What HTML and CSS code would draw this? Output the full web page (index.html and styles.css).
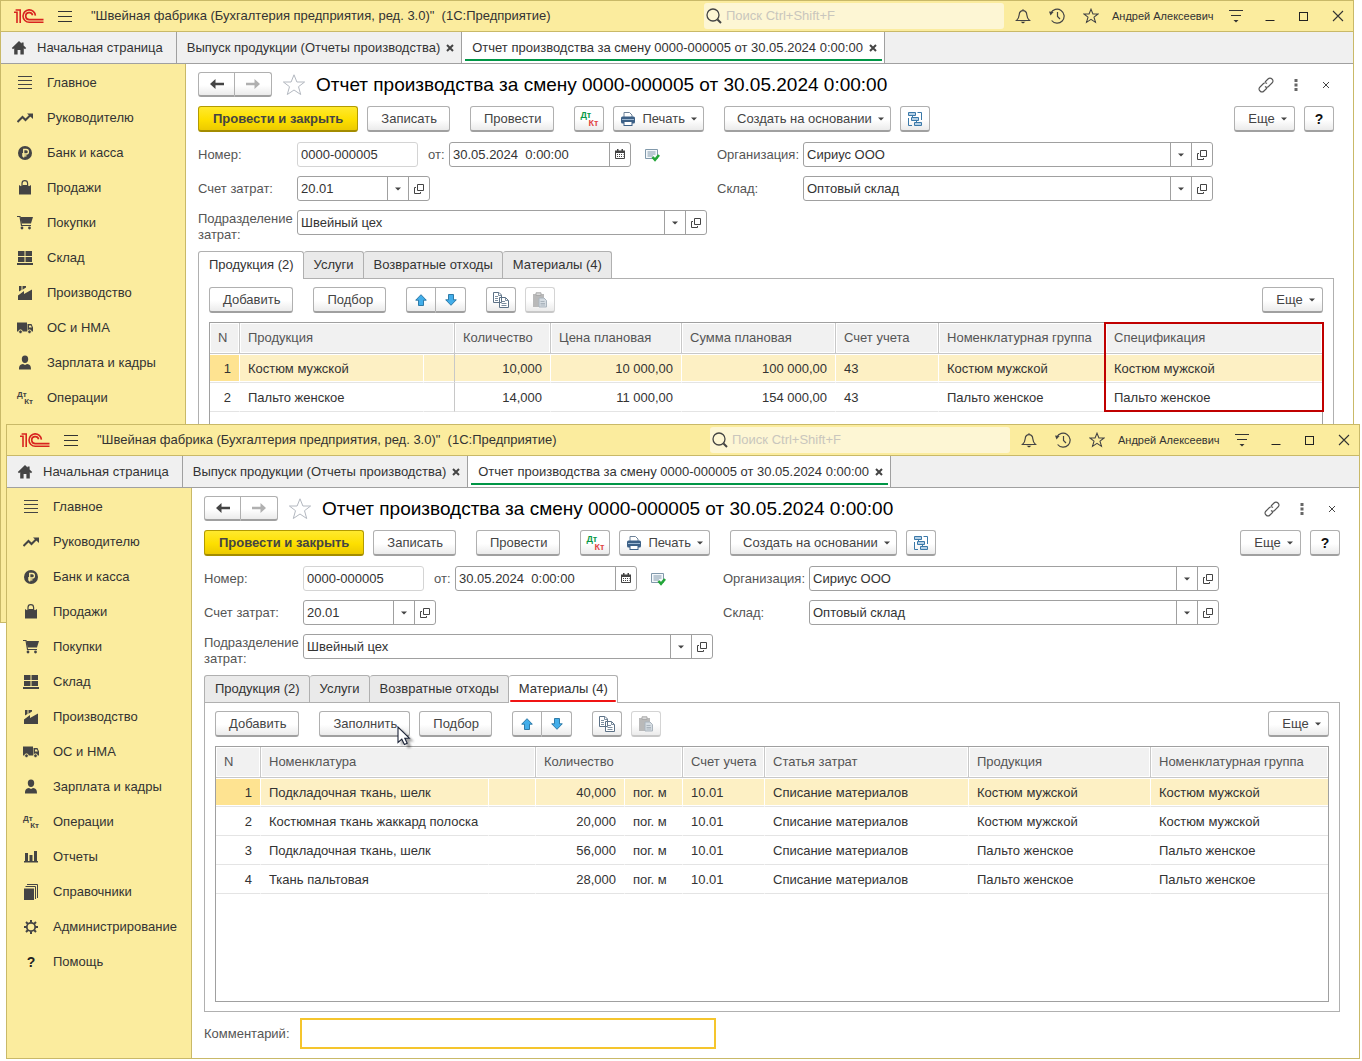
FILE: index.html
```html
<!DOCTYPE html>
<html lang="ru">
<head>
<meta charset="utf-8">
<meta name="viewport" content="width=device-width, initial-scale=1">
<title>Отчет производства за смену</title>
<link rel="stylesheet" href="styles.css">
</head>
<body>
<svg class="sprite" aria-hidden="true">
  <symbol id="logo" viewBox="0 0 30 15"><path d="M0 3.2H3V14M1.6 1H6.2V14M21.4 6.6A6.2 6.2 0 1 0 15.2 13.3H29.5M18.6 6.2A3.5 3.5 0 1 0 15.2 10.6H29.5" fill="none" stroke="#d8231f" stroke-width="1.6"/></symbol>
  <symbol id="burger" viewBox="0 0 14 14"><path d="M0 2.5H14M0 7.5H14M0 12.5H14" stroke="#333" fill="none"/></symbol>
  <symbol id="search" viewBox="0 0 16 16"><circle cx="7" cy="7" r="6" fill="none" stroke="#444" stroke-width="1.3"/><path d="M11.5 11.5L15 15" stroke="#444" stroke-width="2"/></symbol>
  <symbol id="bell" viewBox="0 0 16 16"><path d="M8 1.2V2.5M1.5 12.5H14.5C12.5 10.8 12 9.5 11.8 6.8C11.6 4.2 10.2 2.7 8 2.7S4.4 4.2 4.2 6.8C4 9.5 3.5 10.8 1.5 12.5Z" fill="none" stroke="#444" stroke-width="1.2"/><path d="M5.5 13.8H10.5L8 15.6Z" fill="#333"/></symbol>
  <symbol id="history" viewBox="0 0 16 16"><path d="M1.8 5.2A7 7 0 1 1 2.6 12.5M8.5 4V8.5L11 11" fill="none" stroke="#444" stroke-width="1.2"/><path d="M0 3.5L4.6 4L1.5 7.6Z" fill="#444"/></symbol>
  <symbol id="star" viewBox="0 0 24 24"><path d="M12 1.8L14.9 9H22.6L16.5 13.7L18.7 21.5L12 17L5.3 21.5L7.5 13.7L1.4 9H9.1Z" fill="none" stroke="currentColor" stroke-width="var(--w)"/></symbol>
  <symbol id="funnel" viewBox="0 0 14 14"><path d="M0 1.5H14M2 6.5H12" stroke="#333"/><path d="M4.5 11H9.5L7 13.5Z" fill="#333"/></symbol>
  <symbol id="min" viewBox="0 0 12 12"><path d="M1.5 10.5H10.5" stroke="#222"/></symbol>
  <symbol id="max" viewBox="0 0 12 12"><rect x="1.5" y="2.5" width="8" height="8" fill="none" stroke="#222"/></symbol>
  <symbol id="close" viewBox="0 0 12 12"><path d="M1 1L11 11M11 1L1 11" stroke="#333" stroke-width="1.1"/></symbol>
  <symbol id="cross" viewBox="0 0 8 8"><path d="M1 1L7 7M7 1L1 7" stroke="currentColor" stroke-width="var(--w)"/></symbol>
  <symbol id="home" viewBox="0 0 16 16"><path d="M8 1L.8 7.9L2 9.2L3.2 8.2V14.500H6.600V10H9.400V14.500H12.800V8.200L14 9.200L15.200 7.900L12.600 5.400V2.500H10.600V3.500Z" fill="#444"/></symbol>
  <symbol id="m-main" viewBox="0 0 16 16"><path d="M1 1.5H15M1 5.5H15M1 9.5H15M1 13.5H15" stroke="#444"/></symbol>
  <symbol id="m-trend" viewBox="0 0 16 16"><path d="M.5 12L5.5 7L8.5 10L13.5 5" fill="none" stroke="#444" stroke-width="2"/><path d="M10 3.5H16V9Z" fill="#444"/></symbol>
  <symbol id="m-bank" viewBox="0 0 16 16"><circle cx="8" cy="8" r="7" fill="#444"/><path d="M6.7 12.5V4.5H9.2A2.2 2.2 0 0 1 9.2 9H5M5 10.8H9.5" fill="none" stroke="#fbec9e" stroke-width="1.3"/></symbol>
  <symbol id="m-bag" viewBox="0 0 16 16"><path d="M2 5L4 6.3L6 5H10L12 6.3L14 5V14.5H2Z" fill="#444"/><path d="M5 6.500V3.500A2.600 2.600 0 0 1 10.600 3.500V6.500" fill="none" stroke="#444" stroke-width="1.2"/></symbol>
  <symbol id="m-cart" viewBox="0 0 16 16"><path d="M0 1.500H3L4.500 10.500H14" fill="none" stroke="#444" stroke-width="1.2"/><path d="M3.500 2H16L14 8.500H4.500Z" fill="#444"/><circle cx="5" cy="13" r="1.400" fill="#444"/><circle cx="12.500" cy="13" r="1.400" fill="#444"/></symbol>
  <symbol id="m-store" viewBox="0 0 16 16"><path d="M1 1H7.500V6H1ZM8.500 1H15V6H8.500ZM1 7H7.500V12H1ZM8.500 7H15V12H8.500ZM0 13H16V15H0Z" fill="#444"/></symbol>
  <symbol id="m-fab" viewBox="0 0 16 16"><path d="M1 15V10.500L7 6V9L15 4.500V15ZM2 1H4.500V5L2 6.500ZM5.500 1H9V2.500L5.500 4.800Z" fill="#444"/></symbol>
  <symbol id="m-truck" viewBox="0 0 16 16"><path d="M0 2.500H10V11.500H0ZM10.500 4H14.500L16 7.500V11.500H10.500Z" fill="#444"/><path d="M12 5.500H14L14.800 7.500H12Z" fill="#fbec9e"/><circle cx="3.500" cy="11.800" r="1.900" fill="#444" stroke="#fbec9e"/><circle cx="12.500" cy="11.800" r="1.900" fill="#444" stroke="#fbec9e"/></symbol>
  <symbol id="m-man" viewBox="0 0 16 16"><path d="M8 .5C10.200 .5 11.300 2 11.200 4.200C11.100 6.300 10 8 8 8S4.900 6.300 4.800 4.200C4.700 2 5.800 .5 8 .5ZM2 14.500C2 10.500 3 9.500 6 9L8 10L10 9C13 9.500 14 10.500 14 14.500Z" fill="#444"/></symbol>
  <symbol id="m-rep" viewBox="0 0 16 16"><path d="M1 12H15V13.500H1ZM2 4H5V12H2ZM6.500 6H9.500V12H6.500ZM11 2H14V12H11Z" fill="#444"/></symbol>
  <symbol id="m-book" viewBox="0 0 16 16"><path d="M1 4.500H11V16H1Z" fill="#444"/><path d="M2.500 2.500H12.500V15M4 .5H14.500V14" fill="none" stroke="#444"/></symbol>
  <symbol id="m-gear" viewBox="0 0 16 16"><circle cx="8" cy="8" r="4.200" fill="none" stroke="#444" stroke-width="1.800"/><path d="M8 1V3.500M8 12.500V15M1 8H3.500M12.500 8H15M3 3L5 5M11 11L13 13M13 3L11 5M5 11L3 13" stroke="#444" stroke-width="2"/></symbol>
  <symbol id="left" viewBox="0 0 16 12"><path d="M1 6L6.500 1V4.700H15V7.300H6.500V11Z" fill="currentColor"/></symbol>
  <symbol id="link" viewBox="0 0 16 16"><path d="M7 5L10 2A2.800 2.800 0 0 1 14 6L10.500 9.500A2.600 2.600 0 0 1 7 9.500M9 11L6 14A2.800 2.800 0 0 1 2 10L5.500 6.500A2.600 2.600 0 0 1 9 6.500" fill="none" stroke="#555" stroke-width="1.100"/></symbol>
  <symbol id="dots" viewBox="0 0 4 12"><path d="M.5 0H3.500V3H.5ZM.5 4.500H3.500V7.500H.5ZM.5 9H3.500V12H.5Z" fill="#666"/></symbol>
  <symbol id="printer" viewBox="0 0 16 14"><path d="M4 5V.5H9.500L12 3V5" fill="#fff" stroke="#6d8298"/><rect x="1" y="4.500" width="14" height="7" rx="1.500" fill="#3d6187"/><path d="M2 7.500H14" stroke="#9fb9d3"/><rect x="4" y="9.500" width="8" height="4" fill="#fff" stroke="#3d6187"/></symbol>
  <symbol id="struct" viewBox="0 0 16 16"><path d="M1.500 1.500H8.500V4.500H1.500ZM4.500 6.500H11.500V9.500H4.500ZM7.500 11.500H14.500V14.500H7.500Z" fill="#b5d0e6" stroke="#3a78a8"/><path d="M10.500 1.500H14.500V9M1.500 7V14.500H5M5.500 4.500V6.500M9.500 9.500V11.500" fill="none" stroke="#3a78a8"/></symbol>
  <symbol id="tri" viewBox="0 0 6 4"><path d="M0 .5H6L3 3.500Z" fill="#444"/></symbol>
  <symbol id="open" viewBox="0 0 10 10"><path d="M3.500 .5H9.500V6.500H3.500ZM2 3.500H.5V9.500H6.500V8" fill="none" stroke="#444"/></symbol>
  <symbol id="cal" viewBox="0 0 10 11"><path d="M.5 2.500H9.500V9.500H.5Z" fill="#fff" stroke="#444"/><path d="M0 1.500H10V4H0ZM2 0H3.500V2H2ZM6.500 0H8V2H6.500Z" fill="#444"/><path d="M2 5.500H8.500M2 7.500H8.500" stroke="#444" stroke-dasharray="1 1"/></symbol>
  <symbol id="posted" viewBox="0 0 16 14"><path d="M1.500 1.500H13.500V10.500H1.500Z" fill="#f4f8fb" stroke="#8199ab"/><path d="M3.500 4H11.500M3.500 6H11.500M3.500 8H9" stroke="#8199ab"/><path d="M8.500 9L11 11.800L15 7" fill="none" stroke="#23a638" stroke-width="2.600"/></symbol>
  <symbol id="up" viewBox="0 0 12 12"><path d="M6 .7L11.300 6.200H8.500V11.500H3.500V6.200H.7Z" fill="#42aeea" stroke="#22719f" stroke-width=".9"/></symbol>
  <symbol id="copy" viewBox="0 0 16 16"><path d="M.5 .5H6L8.500 3V10.500H.5ZM6.500 5.500H12.500L15.500 8.500V15.500H6.500Z" fill="#fff" stroke="#5c7186"/><path d="M2 4.500H5M2 6.500H5M2 8.500H5M8.500 9.500H12M8.500 11.500H13.500M8.500 13.500H13.500M5.500 .5V3.500H8.500M12.500 5.500V8.500H15.500" stroke="#7b8d9e" fill="none"/></symbol>
  <symbol id="paste" viewBox="0 0 16 16"><path d="M1 2H12V15H1Z" fill="#b9b9b9"/><path d="M4 .8H9V3.500H4Z" fill="#d8d8d8" stroke="#aaa"/><path d="M7 6H12L14.500 8.500V15H7Z" fill="#d5dce2" stroke="#aab4bd"/><path d="M8.500 9.500H12.500M8.500 11.500H13M8.500 13H13" stroke="#aab4bd"/></symbol>
</svg>

<div class="desktop">

<section class="window back" aria-label="Продукция">
  <header class="titlebar">
    <svg class="logo"><use href="#logo"/></svg>
    <button class="tool burger" aria-label="Меню"><svg class="i14"><use href="#burger"/></svg></button>
    <div class="caption">"Швейная фабрика (Бухгалтерия предприятия, ред. 3.0)"&nbsp; (1С:Предприятие)</div>
    <label class="search"><svg class="i16"><use href="#search"/></svg><input type="text" placeholder="Поиск Ctrl+Shift+F" aria-label="Поиск"></label>
    <button class="tool" aria-label="Уведомления"><svg class="i16"><use href="#bell"/></svg></button>
    <button class="tool" aria-label="История"><svg class="i16"><use href="#history"/></svg></button>
    <button class="tool" aria-label="Избранное"><svg class="i16 star"><use href="#star"/></svg></button>
    <a class="user" href="#">Андрей Алексеевич</a>
    <button class="tool" aria-label="Настройки"><svg class="i14"><use href="#funnel"/></svg></button>
    <button class="tool" aria-label="Свернуть"><svg class="i12"><use href="#min"/></svg></button>
    <button class="tool" aria-label="Развернуть"><svg class="i12"><use href="#max"/></svg></button>
    <button class="tool" aria-label="Закрыть"><svg class="i12"><use href="#close"/></svg></button>
  </header>
  <nav class="pages">
    <a class="page home" href="#"><svg class="i16"><use href="#home"/></svg>Начальная страница</a>
    <div class="page"><a href="#">Выпуск продукции (Отчеты производства)</a><button class="x" aria-label="Закрыть"><svg class="i8"><use href="#cross"/></svg></button></div>
    <div class="page current"><a href="#">Отчет производства за смену 0000-000005 от 30.05.2024 0:00:00</a><button class="x" aria-label="Закрыть"><svg class="i8"><use href="#cross"/></svg></button></div>
  </nav>
  <div class="body">
    <nav class="sidebar">
      <a href="#"><svg class="i16"><use href="#m-main"/></svg>Главное</a>
      <a href="#"><svg class="i16"><use href="#m-trend"/></svg>Руководителю</a>
      <a href="#"><svg class="i16"><use href="#m-bank"/></svg>Банк и касса</a>
      <a href="#"><svg class="i16"><use href="#m-bag"/></svg>Продажи</a>
      <a href="#"><svg class="i16"><use href="#m-cart"/></svg>Покупки</a>
      <a href="#"><svg class="i16"><use href="#m-store"/></svg>Склад</a>
      <a href="#"><svg class="i16"><use href="#m-fab"/></svg>Производство</a>
      <a href="#"><svg class="i16"><use href="#m-truck"/></svg>ОС и НМА</a>
      <a href="#"><svg class="i16"><use href="#m-man"/></svg>Зарплата и кадры</a>
      <a href="#"><span class="dk"><b>Дт</b><b>Кт</b></span>Операции</a>
    </nav>
    <main class="doc">
      <div class="head">
        <div class="pair"><button class="btn" aria-label="Назад"><svg class="arrow"><use href="#left"/></svg></button><button class="btn off" aria-label="Вперед"><svg class="arrow flip"><use href="#left"/></svg></button></div>
        <button class="fav" aria-label="В избранное"><svg class="i24"><use href="#star"/></svg></button>
        <h1>Отчет производства за смену 0000-000005 от 30.05.2024 0:00:00</h1>
        <button class="tool" aria-label="Ссылка"><svg class="i16"><use href="#link"/></svg></button>
        <button class="tool" aria-label="Действия"><svg class="dots"><use href="#dots"/></svg></button>
        <button class="tool thin" aria-label="Закрыть"><svg class="i8"><use href="#cross"/></svg></button>
      </div>
      <div class="bar">
        <button class="btn primary">Провести и закрыть</button>
        <button class="btn">Записать</button>
        <button class="btn gap">Провести</button>
        <button class="btn sq gap" aria-label="Проводки"><span class="dk color"><b>Дт</b><b>Кт</b></span></button>
        <button class="btn menu print"><svg class="i16"><use href="#printer"/></svg>Печать<svg class="tri"><use href="#tri"/></svg></button>
        <button class="btn menu gap">Создать на основании<svg class="tri"><use href="#tri"/></svg></button>
        <button class="btn sq" aria-label="Структура подчиненности"><svg class="i16"><use href="#struct"/></svg></button>
        <button class="btn menu end">Еще<svg class="tri"><use href="#tri"/></svg></button>
        <button class="btn sq help">?</button>
      </div>
      <div class="form">
        <label for="a-num">Номер:</label>
        <div class="line"><input class="box num" id="a-num" value="0000-000005" readonly><label for="a-date">от:</label><div class="box combo date"><input id="a-date" value="30.05.2024&nbsp; 0:00:00"><button aria-label="Календарь"><svg class="cal"><use href="#cal"/></svg></button></div><svg class="posted"><use href="#posted"/></svg></div>
        <label class="second" for="a-org">Организация:</label>
        <div class="box combo"><input id="a-org" value="Сириус ООО"><button aria-label="Выбрать"><svg class="tri"><use href="#tri"/></svg></button><button aria-label="Открыть"><svg class="i10"><use href="#open"/></svg></button></div>
        <label for="a-acc">Счет затрат:</label>
        <div class="box combo acc"><input id="a-acc" value="20.01"><button aria-label="Выбрать"><svg class="tri"><use href="#tri"/></svg></button><button aria-label="Открыть"><svg class="i10"><use href="#open"/></svg></button></div>
        <label class="second" for="a-wh">Склад:</label>
        <div class="box combo"><input id="a-wh" value="Оптовый склад"><button aria-label="Выбрать"><svg class="tri"><use href="#tri"/></svg></button><button aria-label="Открыть"><svg class="i10"><use href="#open"/></svg></button></div>
        <label class="tall" for="a-dep">Подразделение затрат:</label>
        <div class="box combo"><input id="a-dep" value="Швейный цех"><button aria-label="Выбрать"><svg class="tri"><use href="#tri"/></svg></button><button aria-label="Открыть"><svg class="i10"><use href="#open"/></svg></button></div>
      </div>
      <div class="tabs">
        <button class="on">Продукция (2)</button><button>Услуги</button><button>Возвратные отходы</button><button>Материалы (4)</button>
      </div>
      <div class="panel">
        <div class="bar">
          <button class="btn">Добавить</button>
          <button class="btn gap">Подбор</button>
          <div class="pair gap"><button class="btn" aria-label="Вверх"><svg class="i12"><use href="#up"/></svg></button><button class="btn" aria-label="Вниз"><svg class="i12 down"><use href="#up"/></svg></button></div>
          <button class="btn sq gap" aria-label="Копировать"><svg class="i16"><use href="#copy"/></svg></button>
          <button class="btn sq" aria-label="Вставить" disabled><svg class="i16"><use href="#paste"/></svg></button>
          <button class="btn menu end">Еще<svg class="tri"><use href="#tri"/></svg></button>
        </div>
        <div class="grid">
          <table class="products">
            <colgroup><col class="w30"><col class="w184"><col class="w31"><col class="w96"><col class="w131"><col class="w154"><col class="w103"><col class="w167"><col></colgroup>
            <thead><tr><th>N</th><th colspan="2">Продукция</th><th>Количество</th><th>Цена плановая</th><th>Сумма плановая</th><th>Счет учета</th><th>Номенклатурная группа</th><th>Спецификация</th></tr></thead>
            <tbody>
              <tr class="sel"><td class="r">1</td><td>Костюм мужской</td><td class="fix"></td><td class="r">10,000</td><td class="r">10 000,00</td><td class="r">100 000,00</td><td>43</td><td>Костюм мужской</td><td>Костюм мужской</td></tr>
              <tr><td class="r">2</td><td>Пальто женское</td><td class="fix"></td><td class="r">14,000</td><td class="r">11 000,00</td><td class="r">154 000,00</td><td>43</td><td>Пальто женское</td><td>Пальто женское</td></tr>
            </tbody>
          </table>
          <div class="mark"></div>
        </div>
      </div>
    </main>
  </div>
</section>

<section class="window front" aria-label="Материалы">
  <header class="titlebar">
    <svg class="logo"><use href="#logo"/></svg>
    <button class="tool burger" aria-label="Меню"><svg class="i14"><use href="#burger"/></svg></button>
    <div class="caption">"Швейная фабрика (Бухгалтерия предприятия, ред. 3.0)"&nbsp; (1С:Предприятие)</div>
    <label class="search"><svg class="i16"><use href="#search"/></svg><input type="text" placeholder="Поиск Ctrl+Shift+F" aria-label="Поиск"></label>
    <button class="tool" aria-label="Уведомления"><svg class="i16"><use href="#bell"/></svg></button>
    <button class="tool" aria-label="История"><svg class="i16"><use href="#history"/></svg></button>
    <button class="tool" aria-label="Избранное"><svg class="i16 star"><use href="#star"/></svg></button>
    <a class="user" href="#">Андрей Алексеевич</a>
    <button class="tool" aria-label="Настройки"><svg class="i14"><use href="#funnel"/></svg></button>
    <button class="tool" aria-label="Свернуть"><svg class="i12"><use href="#min"/></svg></button>
    <button class="tool" aria-label="Развернуть"><svg class="i12"><use href="#max"/></svg></button>
    <button class="tool" aria-label="Закрыть"><svg class="i12"><use href="#close"/></svg></button>
  </header>
  <nav class="pages">
    <a class="page home" href="#"><svg class="i16"><use href="#home"/></svg>Начальная страница</a>
    <div class="page"><a href="#">Выпуск продукции (Отчеты производства)</a><button class="x" aria-label="Закрыть"><svg class="i8"><use href="#cross"/></svg></button></div>
    <div class="page current"><a href="#">Отчет производства за смену 0000-000005 от 30.05.2024 0:00:00</a><button class="x" aria-label="Закрыть"><svg class="i8"><use href="#cross"/></svg></button></div>
  </nav>
  <div class="body">
    <nav class="sidebar">
      <a href="#"><svg class="i16"><use href="#m-main"/></svg>Главное</a>
      <a href="#"><svg class="i16"><use href="#m-trend"/></svg>Руководителю</a>
      <a href="#"><svg class="i16"><use href="#m-bank"/></svg>Банк и касса</a>
      <a href="#"><svg class="i16"><use href="#m-bag"/></svg>Продажи</a>
      <a href="#"><svg class="i16"><use href="#m-cart"/></svg>Покупки</a>
      <a href="#"><svg class="i16"><use href="#m-store"/></svg>Склад</a>
      <a href="#"><svg class="i16"><use href="#m-fab"/></svg>Производство</a>
      <a href="#"><svg class="i16"><use href="#m-truck"/></svg>ОС и НМА</a>
      <a href="#"><svg class="i16"><use href="#m-man"/></svg>Зарплата и кадры</a>
      <a href="#"><span class="dk"><b>Дт</b><b>Кт</b></span>Операции</a>
      <a href="#"><svg class="i16"><use href="#m-rep"/></svg>Отчеты</a>
      <a href="#"><svg class="i16"><use href="#m-book"/></svg>Справочники</a>
      <a href="#"><svg class="i16"><use href="#m-gear"/></svg>Администрирование</a>
      <a href="#"><b class="q">?</b>Помощь</a>
    </nav>
    <main class="doc">
      <div class="head">
        <div class="pair"><button class="btn" aria-label="Назад"><svg class="arrow"><use href="#left"/></svg></button><button class="btn off" aria-label="Вперед"><svg class="arrow flip"><use href="#left"/></svg></button></div>
        <button class="fav" aria-label="В избранное"><svg class="i24"><use href="#star"/></svg></button>
        <h1>Отчет производства за смену 0000-000005 от 30.05.2024 0:00:00</h1>
        <button class="tool" aria-label="Ссылка"><svg class="i16"><use href="#link"/></svg></button>
        <button class="tool" aria-label="Действия"><svg class="dots"><use href="#dots"/></svg></button>
        <button class="tool thin" aria-label="Закрыть"><svg class="i8"><use href="#cross"/></svg></button>
      </div>
      <div class="bar">
        <button class="btn primary">Провести и закрыть</button>
        <button class="btn">Записать</button>
        <button class="btn gap">Провести</button>
        <button class="btn sq gap" aria-label="Проводки"><span class="dk color"><b>Дт</b><b>Кт</b></span></button>
        <button class="btn menu print"><svg class="i16"><use href="#printer"/></svg>Печать<svg class="tri"><use href="#tri"/></svg></button>
        <button class="btn menu gap">Создать на основании<svg class="tri"><use href="#tri"/></svg></button>
        <button class="btn sq" aria-label="Структура подчиненности"><svg class="i16"><use href="#struct"/></svg></button>
        <button class="btn menu end">Еще<svg class="tri"><use href="#tri"/></svg></button>
        <button class="btn sq help">?</button>
      </div>
      <div class="form">
        <label for="b-num">Номер:</label>
        <div class="line"><input class="box num" id="b-num" value="0000-000005" readonly><label for="b-date">от:</label><div class="box combo date"><input id="b-date" value="30.05.2024&nbsp; 0:00:00"><button aria-label="Календарь"><svg class="cal"><use href="#cal"/></svg></button></div><svg class="posted"><use href="#posted"/></svg></div>
        <label class="second" for="b-org">Организация:</label>
        <div class="box combo"><input id="b-org" value="Сириус ООО"><button aria-label="Выбрать"><svg class="tri"><use href="#tri"/></svg></button><button aria-label="Открыть"><svg class="i10"><use href="#open"/></svg></button></div>
        <label for="b-acc">Счет затрат:</label>
        <div class="box combo acc"><input id="b-acc" value="20.01"><button aria-label="Выбрать"><svg class="tri"><use href="#tri"/></svg></button><button aria-label="Открыть"><svg class="i10"><use href="#open"/></svg></button></div>
        <label class="second" for="b-wh">Склад:</label>
        <div class="box combo"><input id="b-wh" value="Оптовый склад"><button aria-label="Выбрать"><svg class="tri"><use href="#tri"/></svg></button><button aria-label="Открыть"><svg class="i10"><use href="#open"/></svg></button></div>
        <label class="tall" for="b-dep">Подразделение затрат:</label>
        <div class="box combo"><input id="b-dep" value="Швейный цех"><button aria-label="Выбрать"><svg class="tri"><use href="#tri"/></svg></button><button aria-label="Открыть"><svg class="i10"><use href="#open"/></svg></button></div>
      </div>
      <div class="tabs">
        <button>Продукция (2)</button><button>Услуги</button><button>Возвратные отходы</button><button class="on red">Материалы (4)</button>
      </div>
      <div class="panel">
        <div class="bar">
          <button class="btn">Добавить</button>
          <button class="btn gap fill">Заполнить<svg class="cursor" viewBox="0 0 22 26"><path d="M4 3V20L8.200 16.500L11 22.500L14.500 21L12 15.500H17Z" fill="#000" opacity=".35" class="shade"/><path d="M1 1V16.500L4.800 13.200L7.400 18.600L10.200 17.300L7.800 12.200H12.300Z" fill="#fff" stroke="#1c2438" stroke-width="1.100"/></svg></button>
          <button class="btn">Подбор</button>
          <div class="pair gap"><button class="btn" aria-label="Вверх"><svg class="i12"><use href="#up"/></svg></button><button class="btn" aria-label="Вниз"><svg class="i12 down"><use href="#up"/></svg></button></div>
          <button class="btn sq gap" aria-label="Копировать"><svg class="i16"><use href="#copy"/></svg></button>
          <button class="btn sq" aria-label="Вставить" disabled><svg class="i16"><use href="#paste"/></svg></button>
          <button class="btn menu end">Еще<svg class="tri"><use href="#tri"/></svg></button>
        </div>
        <div class="grid">
          <table>
            <colgroup><col class="w45"><col class="w228"><col class="w47"><col class="w89"><col class="w58"><col class="w82"><col class="w204"><col class="w182"><col></colgroup>
            <thead><tr><th>N</th><th colspan="2">Номенклатура</th><th colspan="2">Количество</th><th>Счет учета</th><th>Статья затрат</th><th>Продукция</th><th>Номенклатурная группа</th></tr></thead>
            <tbody>
              <tr class="sel"><td class="r">1</td><td>Подкладочная ткань, шелк</td><td></td><td class="r">40,000</td><td>пог. м</td><td>10.01</td><td>Списание материалов</td><td>Костюм мужской</td><td>Костюм мужской</td></tr>
              <tr><td class="r">2</td><td>Костюмная ткань жаккард полоска</td><td></td><td class="r">20,000</td><td>пог. м</td><td>10.01</td><td>Списание материалов</td><td>Костюм мужской</td><td>Костюм мужской</td></tr>
              <tr><td class="r">3</td><td>Подкладочная ткань, шелк</td><td></td><td class="r">56,000</td><td>пог. м</td><td>10.01</td><td>Списание материалов</td><td>Пальто женское</td><td>Пальто женское</td></tr>
              <tr><td class="r">4</td><td>Ткань пальтовая</td><td></td><td class="r">28,000</td><td>пог. м</td><td>10.01</td><td>Списание материалов</td><td>Пальто женское</td><td>Пальто женское</td></tr>
            </tbody>
          </table>
        </div>
      </div>
      <div class="comment"><label for="b-com">Комментарий:</label><input id="b-com"></div>
    </main>
  </div>
</section>

</div>
</body>
</html>
```

FILE: styles.css
```css
* { box-sizing: border-box; }
body {
  margin: 0;
  background: #fff;
  font: 13px/16px "Liberation Sans", Arial, sans-serif;
  color: #333;
}
button, input { font: inherit; color: inherit; margin: 0; }
button { padding: 0; border: 0; background: none; display: flex; align-items: center; justify-content: center; }
input { border: 0; background: none; padding: 0; min-width: 0; outline: 0; }
a { color: inherit; text-decoration: none; white-space: nowrap; }
svg { display: block; flex: none; }
.sprite { position: absolute; width: 0; height: 0; }

.i8 { width: 8px; height: 8px; }
.i10 { width: 10px; height: 10px; }
.i12 { width: 12px; height: 12px; }
.i14 { width: 14px; height: 14px; }
.i16 { width: 16px; height: 16px; }
.i24 { width: 24px; height: 24px; }
.tri { width: 6px; height: 4px; }
.dots { width: 4px; height: 12px; }
.cal { width: 10px; height: 11px; }
.posted { width: 16px; height: 14px; margin-left: 13px; }
.arrow { width: 16px; height: 12px; }
.flip { transform: rotate(180deg); }
.down { transform: rotate(180deg); }

/* Windows on the desktop */
.desktop { position: relative; min-height: 100vh; overflow: hidden; }
.window {
  position: absolute;
  display: flex;
  flex-direction: column;
  background: #fff;
  border: 1px solid #c9b968;
}
.back { left: 0; right: 8px; top: 0; min-height: 623px; }
.front { left: 6px; right: 2px; top: 424px; }

/* Title bar */
.titlebar {
  display: flex;
  align-items: center;
  gap: 4px;
  height: 31px;
  padding-left: 13px;
  background: #fbec9e;
  border-bottom: 1px solid #c9b968;
}
.logo { width: 30px; height: 15px; }
.tool { width: 30px; height: 30px; flex: none; }
.titlebar .burger { margin-left: 2px; }
.caption { flex: 1; margin-left: 7px; white-space: nowrap; }
.search {
  display: flex;
  align-items: center;
  gap: 4px;
  width: 300px;
  height: 26px;
  padding-left: 2px;
  border-radius: 3px;
  background: #fdf6d4;
}
.search input { flex: 1; }
.search input::placeholder { color: #c9c6bd; opacity: 1; }
.star { --w: 1.6; color: #444; }
.user { min-width: 103px; margin: 0 2px; font-size: 11px; }

/* Open pages */
.pages { display: flex; height: 32px; background: #f0f0f0; border-bottom: 1px solid #a0a0a0; }
.page {
  display: flex;
  align-items: center;
  gap: 5px;
  padding: 0 7px 0 10px;
  border-right: 1px solid #a0a0a0;
}
.home { gap: 10px; padding: 0 13px 0 10px; }
.x { --w: 2; width: 9px; height: 16px; color: #444; }
.current { position: relative; background: #fff; }
.current::after {
  content: "";
  position: absolute;
  left: 3px;
  right: 2px;
  bottom: 2px;
  height: 2px;
  background: #009646;
}

.body { display: flex; flex: 1; }
.sidebar {
  width: 185px;
  flex: none;
  padding-top: 1px;
  background: #fbec9e;
  border-right: 1px solid #c9b968;
}
.sidebar a { display: flex; align-items: center; gap: 14px; height: 35px; padding-left: 16px; }
.dk { display: flex; flex-direction: column; width: 16px; font-size: 8px; line-height: 7px; text-align: left; color: #444; }
.dk b:last-child { align-self: flex-end; }
.dk.color { font-size: 9px; line-height: 8px; width: 18px; }
.dk.color b { color: #0a9a48; }
.dk.color b:last-child { color: #e04545; }
.q { width: 16px; font-size: 14px; text-align: center; color: #222; }

/* Document */
.doc { flex: 1; min-width: 0; padding: 8px 19px 9px 12px; }
.head { display: flex; align-items: center; height: 25px; }
.head .pair .btn { width: 37px; height: 25px; }
.fav { --w: 1; width: 24px; margin: 0 10px; color: #b3b8c0; }
h1 { flex: 1; margin: 0; font-size: 19px; line-height: 24px; font-weight: 400; color: #000; white-space: nowrap; }
.head .thin { --w: 1; width: 16px; margin-left: 7px; color: #444; }
.bar { display: flex; gap: 9px; margin-top: 9px; }
.btn {
  height: 26px;
  padding: 0 12px 0 13px;
  flex: none;
  border: 1px solid #b0b0b0;
  border-bottom: 2px solid #a0a0a0;
  border-radius: 3px;
  background: linear-gradient(#fff 55%, #ebebeb);
  color: #444;
  white-space: nowrap;
}
.btn.gap, .pair.gap { margin-left: 11px; }
.btn.primary {
  padding: 0 14px;
  font-weight: 700;
  border-color: #b39b00;
  border-bottom-color: #a38c00;
  background: linear-gradient(#ffe92e, #fddf00 55%, #ecca00);
}
.btn.sq { width: 30px; padding: 0; }
.btn.menu { gap: 6px; padding: 0 6px 0 12px; }
.btn.print { padding-left: 6px; }
.btn.end { width: 61px; margin-left: auto; }
.btn.help { font-size: 14px; font-weight: 700; color: #111; }
.btn.off { color: #b0b0b0; }
.btn:disabled { border-color: #d4d4d4; border-bottom-color: #c8c8c8; }
.pair { display: flex; }
.pair .btn { width: 30px; padding: 0; }
.pair .btn:first-child { border-radius: 3px 0 0 3px; }
.pair .btn:last-child { border-left: 0; border-radius: 0 3px 3px 0; }

.form {
  display: grid;
  grid-template-columns: 99px minmax(0, 410px) 96px minmax(0, 410px);
  row-gap: 9px;
  margin-top: 10px;
  align-items: start;
}
.form label { line-height: 25px; color: #555; white-space: nowrap; }
.form .second { padding-left: 10px; }
.form .tall { padding: 1px 0 0; line-height: 16px; white-space: normal; }
.line { display: flex; align-items: center; }
.line label { margin: 0 0 0 10px; width: 21px; }
.box { height: 25px; border: 1px solid #a0a0a0; border-radius: 3px; }
.num { width: 121px; padding-left: 3px; border-color: #d4d4d4; }
.combo { display: flex; }
.combo input { flex: 1; padding-left: 3px; }
.combo button { width: 21px; border-left: 1px solid #a0a0a0; }
.date { width: 182px; }
.acc { width: 133px; }

.tabs { display: flex; margin-top: 8px; }
.tabs button {
  height: 27px;
  padding: 0 9px 0 10px;
  border: 1px solid #b0b0b0;
  border-left-width: 0;
  border-bottom: 0;
  border-radius: 3px 3px 0 0;
  background: #eaeaea;
}
.tabs button:first-child { border-left-width: 1px; }
.tabs .on { height: 28px; margin-bottom: -1px; padding-bottom: 2px; background: #fff; position: relative; }
.tabs .red::after {
  content: "";
  position: absolute;
  left: 1px;
  right: 1px;
  bottom: 1px;
  height: 2px;
  border-radius: 1px;
  background: #f01414;
}
.panel { padding: 8px 10px 9px; border: 1px solid #b0b0b0; }
.panel .bar { margin: 0 0 9px; }
.fill { position: relative; }
.cursor { position: absolute; left: 77px; top: 14px; width: 22px; height: 26px; z-index: 1; }
.shade { filter: blur(1px); }

.grid { position: relative; min-height: 256px; border: 1px solid #a0a0a0; }
table { width: 100%; table-layout: fixed; border-collapse: separate; border-spacing: 0; }
th, td { padding: 0 8px; text-align: left; white-space: nowrap; }
th {
  height: 31px;
  font-weight: 400;
  color: #555;
  background: #f1f1f1;
  border-right: 1px solid #c8c8c8;
  border-bottom: 1px solid #c8c8c8;
  box-shadow: inset 0 0 0 1px #fff;
}
td { height: 29px; padding-top: 2px; border-right: 1px solid #fff; border-bottom: 1px solid #e4e4e4; }
th:last-child, td:last-child { border-right: 0; }
.r { text-align: right; }
.fix { border-right-color: #c8c8c8; }
.sel td { background: #fdf0c4; box-shadow: inset 0 1px #fff, inset 0 -1px #fff; }
.sel td:first-child { background: #fee391; }
.w30 { width: 30px; } .w31 { width: 31px; } .w45 { width: 45px; } .w47 { width: 47px; }
.w58 { width: 58px; } .w82 { width: 82px; } .w89 { width: 89px; } .w96 { width: 96px; }
.w103 { width: 103px; } .w131 { width: 131px; } .w154 { width: 154px; } .w167 { width: 167px; }
.w182 { width: 182px; } .w184 { width: 184px; } .w204 { width: 204px; } .w228 { width: 228px; }

/* Frame drawn over the specification column */
.mark { position: absolute; left: 894px; right: -2px; top: -1px; height: 90px; border: 2px solid #c00000; }

.comment { display: flex; align-items: center; margin-top: 6px; }
.comment label { width: 96px; color: #555; }
.comment input { width: 416px; height: 31px; padding: 0 4px; border: 2px solid #f5c52d; }
```
